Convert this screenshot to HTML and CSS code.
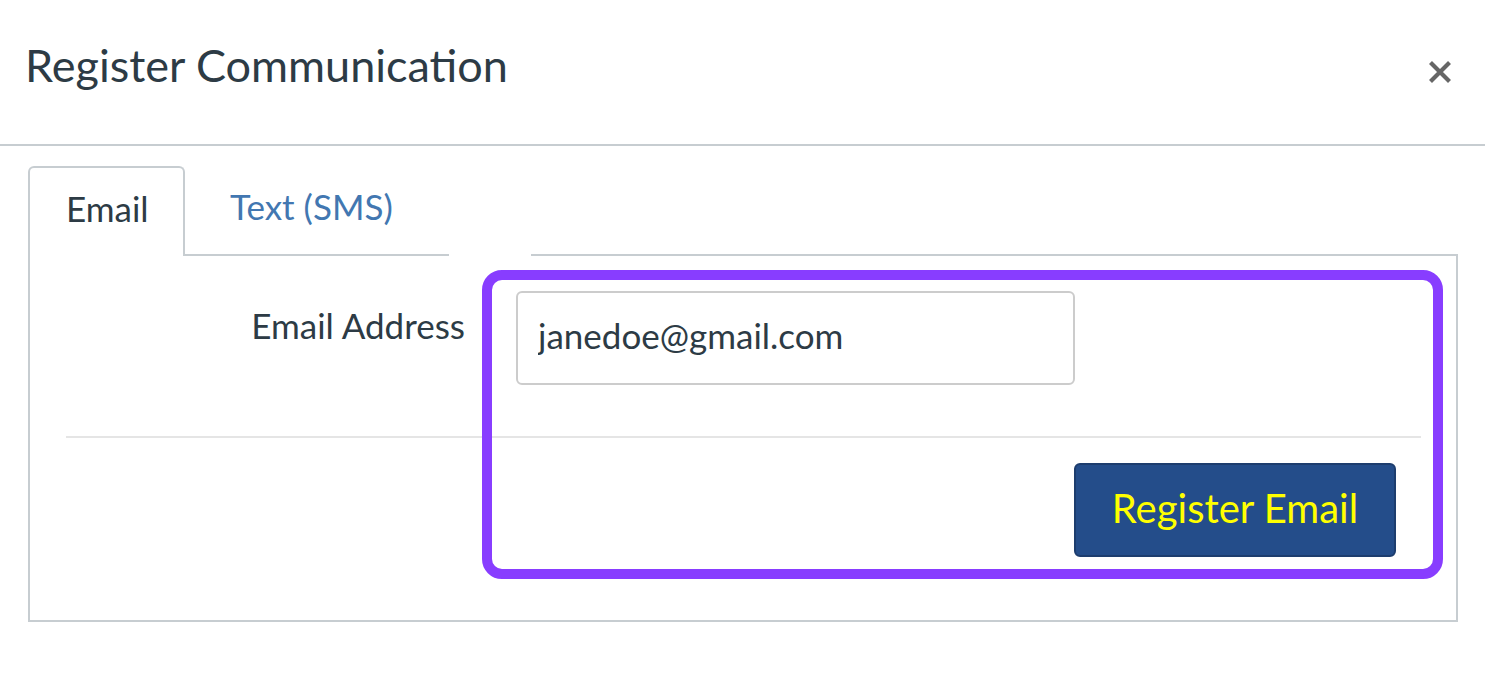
FILE: index.html
```html
<!DOCTYPE html>
<html lang="en">
<head>
<meta charset="utf-8">
<title>Register Communication</title>
<link rel="stylesheet" href="styles.css">
</head>
<body>
<div class="dialog">
  <header class="dialog-header">
    <h1 class="dialog-title">Register Communication</h1>
    <button class="close-btn" aria-label="Close">
      <svg width="24" height="24" viewBox="0 0 24 24"><path d="M2.5 2.5 L21.5 21.5 M21.5 2.5 L2.5 21.5" stroke="#666" stroke-width="4.2" fill="none"/></svg>
    </button>
  </header>
  <div class="dialog-body">
    <div class="tabs">
      <div class="tab tab-active">Email</div>
      <div class="tab tab-link">Text (SMS)</div>
      <div class="tab-gap"></div>
      <div class="tab-fill"></div>
    </div>
    <div class="tab-panel">
      <div class="form-row">
        <label class="form-label" for="email">Email Address</label>
        <input class="form-input" id="email" type="text" value="janedoe@gmail.com">
      </div>
      <hr class="separator">
      <div class="actions">
        <button class="btn-primary">Register Email</button>
      </div>
      <div class="highlight"></div>
    </div>
  </div>
</div>
</body>
</html>
```

FILE: styles.css
```css
* { box-sizing: border-box; }
html, body { margin: 0; padding: 0; background: #fff; }
body {
  font-family: Lato, "Open Sans", "Liberation Sans", sans-serif;
  color: #2d3b45;
}
.dialog { width: 1485px; }
.dialog-header {
  height: 146px;
  border-bottom: 2px solid #c7cdd1;
  display: flex;
  align-items: flex-start;
  justify-content: space-between;
  padding: 40px 33px 0 25px;
}
.dialog-title {
  margin: 0;
  font-size: 45px;
  font-weight: 400;
  line-height: 50px;
  color: #2d3b45;
}
.close-btn {
  margin-top: 20px;
  border: 0;
  background: none;
  padding: 0;
  width: 24px;
  height: 24px;
  display: block;
}
.close-btn svg { display: block; }
.dialog-body { padding: 20px 27px 0 28px; }
.tabs { display: flex; align-items: stretch; height: 90px; }
.tab {
  font-size: 35px;
  line-height: 1;
  display: flex;
  align-items: center;
  padding-bottom: 7px;
}
.tab-active {
  width: 157px;
  border: 2px solid #c7cdd1;
  border-bottom: 0;
  border-radius: 6px 6px 0 0;
  padding-left: 36px;
  color: #2d3b45;
}
.tab-link {
  width: 264px;
  border-bottom: 2px solid #c7cdd1;
  padding-left: 45px;
  color: #4277b1;
}
.tab-gap { width: 82px; }
.tab-fill { flex: 1; border-bottom: 2px solid #c7cdd1; }
.tab-panel {
  position: relative;
  border: 2px solid #c7cdd1;
  border-top: 0;
  padding: 35px 35px 63px 36px;
}
.form-row {
  display: grid;
  grid-template-columns: 399px 559px;
  column-gap: 51px;
  align-items: start;
}
.form-label {
  text-align: right;
  font-size: 35px;
  line-height: 40px;
  padding-top: 14px;
}
.form-input {
  width: 559px;
  height: 94px;
  border: 2px solid #ccc;
  border-radius: 6px;
  padding: 0 20px 6px;
  font-family: Lato, "Open Sans", "Liberation Sans", sans-serif;
  font-size: 35px;
  color: #2d3b45;
  outline: none;
}
.separator {
  margin: 51px 0 0;
  border: 0;
  border-top: 2px solid #e5e5e5;
  height: 0;
}
.actions {
  display: flex;
  justify-content: flex-end;
  padding: 25px 25px 0 0;
}
.btn-primary {
  width: 322px;
  height: 94px;
  background: #244d8a;
  border: 2px solid #1d3d6e;
  border-radius: 6px;
  color: #ffff00;
  font-family: Lato, "Open Sans", "Liberation Sans", sans-serif;
  font-size: 40px;
  padding: 0 0 4px;
}
.highlight {
  position: absolute;
  left: 452px;
  top: 14px;
  width: 961px;
  height: 309px;
  border: 10px solid #883dff;
  border-radius: 20px;
  pointer-events: none;
}
```
